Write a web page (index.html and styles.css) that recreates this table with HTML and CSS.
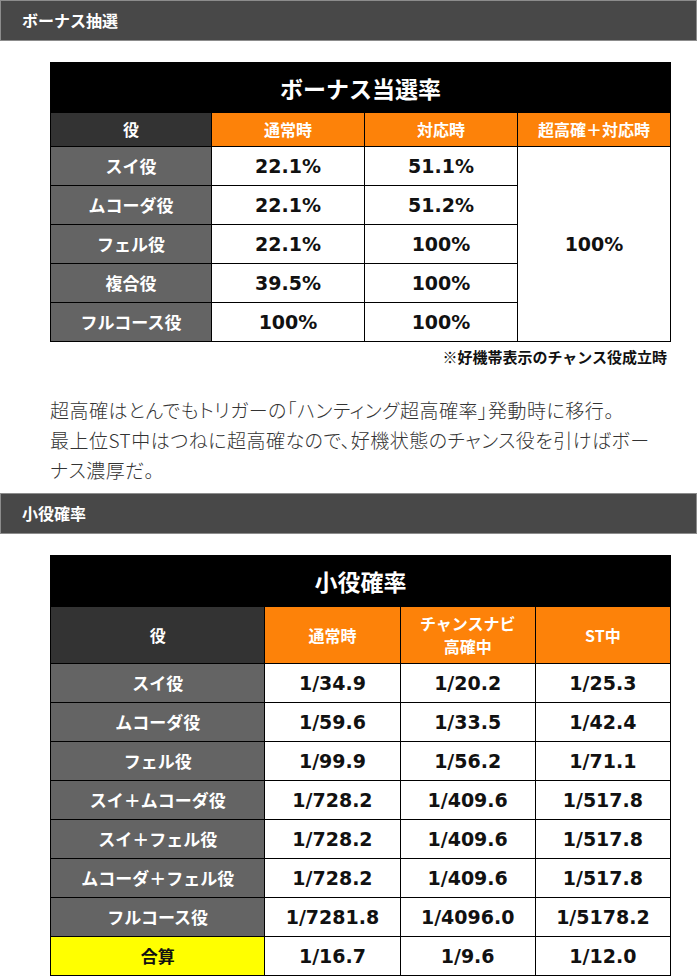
FILE: index.html
```html
<!DOCTYPE html>
<html lang="ja">
<head>
<meta charset="utf-8">
<title>ボーナス抽選・小役確率</title>
<link rel="stylesheet" href="styles.css">
</head>
<body>
<div class="page">
  <h2 class="bar">ボーナス抽選</h2>
  <div class="content">
    <table class="tbl t1">
      <colgroup><col class="c-head"><col class="c-val"><col class="c-val"><col class="c-val"></colgroup>
      <tr class="title-row"><th colspan="4" class="title">ボーナス当選率</th></tr>
      <tr class="head-row">
        <th class="dark">役</th>
        <th class="orange">通常時</th>
        <th class="orange">対応時</th>
        <th class="orange">超高確＋対応時</th>
      </tr>
      <tr><th class="grey">スイ役</th><td>22.1%</td><td>51.1%</td><td rowspan="5">100%</td></tr>
      <tr><th class="grey">ムコーダ役</th><td>22.1%</td><td>51.2%</td></tr>
      <tr><th class="grey">フェル役</th><td>22.1%</td><td>100%</td></tr>
      <tr><th class="grey">複合役</th><td>39.5%</td><td>100%</td></tr>
      <tr><th class="grey">フルコース役</th><td>100%</td><td>100%</td></tr>
    </table>
    <p class="note">※好機帯表示のチャンス役成立時</p>
    <p class="text">超高確はとんでもトリガーの「ハンティング超高確率」発動時に移行。<br>最上位ST中はつねに超高確なので、好機状態のチャンス役を引けばボーナス濃厚だ。</p>
  </div>
  <h2 class="bar">小役確率</h2>
  <div class="content">
    <table class="tbl t2">
      <colgroup><col class="c-head2"><col class="c-val2"><col class="c-val2"><col class="c-val2"></colgroup>
      <tr class="title-row2"><th colspan="4" class="title">小役確率</th></tr>
      <tr class="head-row2">
        <th class="dark">役</th>
        <th class="orange">通常時</th>
        <th class="orange">チャンスナビ<br>高確中</th>
        <th class="orange">ST中</th>
      </tr>
      <tr><th class="grey">スイ役</th><td>1/34.9</td><td>1/20.2</td><td>1/25.3</td></tr>
      <tr><th class="grey">ムコーダ役</th><td>1/59.6</td><td>1/33.5</td><td>1/42.4</td></tr>
      <tr><th class="grey">フェル役</th><td>1/99.9</td><td>1/56.2</td><td>1/71.1</td></tr>
      <tr><th class="grey">スイ＋ムコーダ役</th><td>1/728.2</td><td>1/409.6</td><td>1/517.8</td></tr>
      <tr><th class="grey">スイ＋フェル役</th><td>1/728.2</td><td>1/409.6</td><td>1/517.8</td></tr>
      <tr><th class="grey">ムコーダ＋フェル役</th><td>1/728.2</td><td>1/409.6</td><td>1/517.8</td></tr>
      <tr><th class="grey">フルコース役</th><td>1/7281.8</td><td>1/4096.0</td><td>1/5178.2</td></tr>
      <tr><th class="yellow">合算</th><td>1/16.7</td><td>1/9.6</td><td>1/12.0</td></tr>
    </table>
  </div>
</div>
</body>
</html>
```
FILE: styles.css
```css
html, body {
  margin: 0;
  padding: 0;
  background: #ffffff;
}
body {
  font-family: "Noto Sans CJK JP", "Noto Sans", sans-serif;
  color: #333333;
}
.page {
  width: 697px;
}
.bar {
  box-sizing: border-box;
  height: 41px;
  margin: 0;
  padding: 0 0 0 21px;
  background: #484848;
  border: 1px solid #8c8c8c;
  color: #ffffff;
  font-size: 16px;
  font-weight: 700;
  line-height: 39px;
}
.content {
  padding: 21px 26px 0 50px;
}
.tbl {
  width: 621px;
  border-collapse: collapse;
  table-layout: fixed;
  border: 1px solid #000000;
}
.c-head { width: 161px; }
.c-val { width: 153px; }
.c-head2 { width: 214px; }
.c-val2 { width: 135px; }
.tbl th,
.tbl td {
  border: 1px solid #000000;
  padding: 0;
  text-align: center;
  vertical-align: middle;
}
.tbl tr { height: 39px; }
.tbl .title-row { height: 50px; }
.tbl .title-row2 { height: 51px; }
.tbl .head-row { height: 34px; }
.tbl .head-row2 { height: 57px; }
.tbl th {
  font-family: "Noto Sans CJK JP", sans-serif;
  font-weight: 700;
  color: #ffffff;
}
.tbl .title {
  background: #000000;
  font-size: 23px;
  line-height: 30px;
}
.tbl .dark,
.tbl .orange {
  font-size: 16px;
  line-height: 23px;
}
.tbl .dark { background: #333333; }
.tbl .orange { background: #fd8209; }
.tbl .grey {
  background: #646464;
  font-size: 17px;
  line-height: 24px;
}
.tbl .yellow {
  background: #ffff00;
  color: #111111;
  font-size: 17px;
  line-height: 24px;
}
.tbl td {
  background: #ffffff;
  font-family: "DejaVu Sans", "Noto Sans CJK JP", sans-serif;
  font-weight: 700;
  font-size: 19px;
  line-height: 24px;
  color: #111111;
}
.note {
  margin: 4px 4px 0 0;
  text-align: right;
  font-size: 15px;
  font-weight: 700;
  line-height: 22px;
  color: #111111;
}
.text {
  margin: 27px 9px 8px 0;
  font-size: 19px;
  font-weight: 300;
  line-height: 30px;
  color: #333333;
  font-feature-settings: "palt";
  letter-spacing: 0.5px;
}
```
